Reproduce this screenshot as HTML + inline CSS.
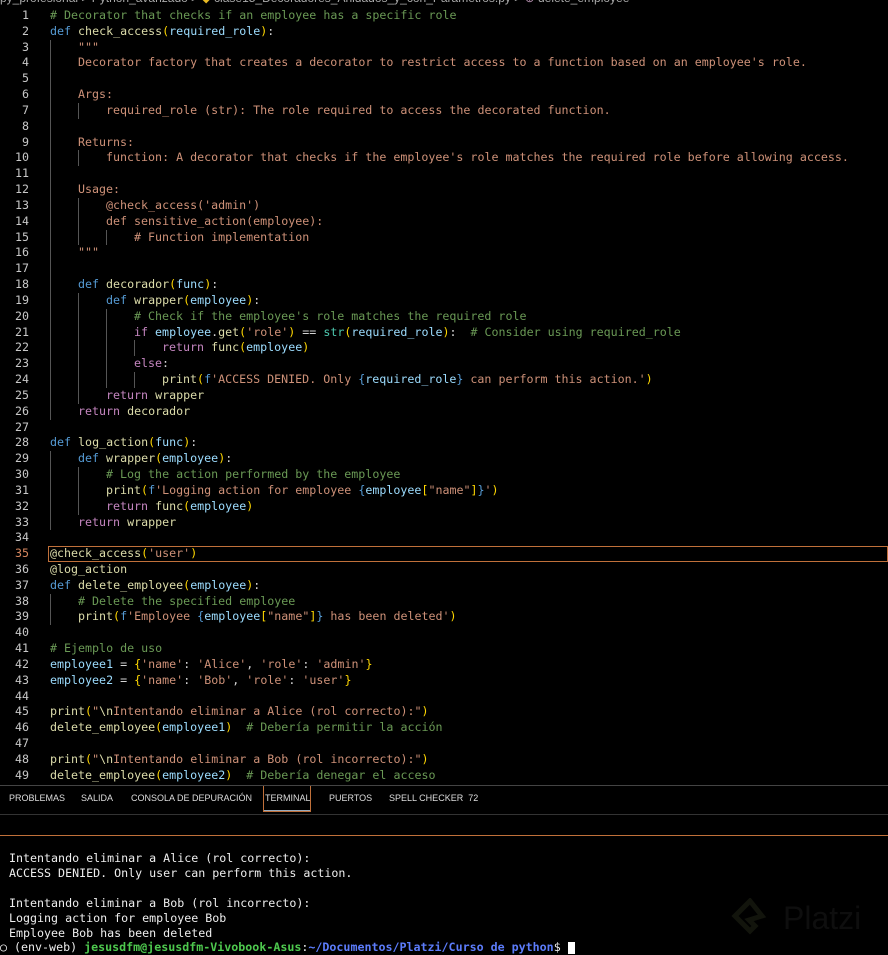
<!DOCTYPE html>
<html><head><meta charset="utf-8"><style>
body{margin:0;background:#000;width:888px;height:953px;overflow:hidden;position:relative;font-family:"DejaVu Sans Mono","Liberation Mono",monospace;}
.bc{position:absolute;top:-9px;left:0;font:12px "Liberation Sans",sans-serif;color:#aaa;white-space:pre}
.ed{position:absolute;top:8px;left:0;width:888px}
.l{height:15.83px;line-height:15.83px;font-size:11.65px;white-space:pre;position:relative;color:#d4d4d4}
.n{position:absolute;left:0;width:29px;text-align:right;color:#c8c8c8}
.t{position:absolute;left:50px}
.g{display:inline-block;width:28px;height:15.83px;vertical-align:top;border-left:1px solid #555;box-sizing:border-box}
.k{color:#569cd6}.c{color:#c586c0}.f{color:#dcdcaa}.p{color:#9cdcfe}.s{color:#ce9178}.m{color:#6a9955}.y{color:#ffd700}
.hl{border:1px solid #c0703a;box-sizing:border-box;position:absolute;left:48px;right:0;top:0;height:15.83px}
.panel{position:absolute;top:785px;left:0;width:888px;height:168px;border-top:1px solid #444}
.tabs{position:absolute;top:7px;left:9px;font:9px "Liberation Sans",sans-serif;color:#ddd;white-space:pre}
.tabs span{position:absolute;top:0}
.term{position:absolute;top:49px;left:0;width:888px;height:1px;background:#c0703a}
.tl{position:absolute;left:9px;font-size:11.65px;color:#eee;white-space:pre;line-height:15px}
</style></head><body>
<div class="bc">py_profesional &gt; Python_avanzado &gt; <span style="color:#e8b923">◆</span> clase15_Decoradores_Anidados_y_con_Parametros.py &gt; <span style="color:#b48ead">⊕</span> delete_employee</div>
<div class="ed">
<div class="l"><span class="n">1</span><span class="t"><span class="m"># Decorator that checks if an employee has a specific role</span></span></div>
<div class="l"><span class="n">2</span><span class="t"><span class="k">def</span> <span class="f">check_access</span><span class="y">(</span><span class="p">required_role</span><span class="y">)</span>:</span></div>
<div class="l"><span class="n">3</span><span class="t"><span class="g"></span><span class="s">"""</span></span></div>
<div class="l"><span class="n">4</span><span class="t"><span class="g"></span><span class="s">Decorator factory that creates a decorator to restrict access to a function based on an employee's role.</span></span></div>
<div class="l"><span class="n">5</span><span class="t"><span class="g"></span></span></div>
<div class="l"><span class="n">6</span><span class="t"><span class="g"></span><span class="s">Args:</span></span></div>
<div class="l"><span class="n">7</span><span class="t"><span class="g"></span><span class="g"></span><span class="s">required_role (str): The role required to access the decorated function.</span></span></div>
<div class="l"><span class="n">8</span><span class="t"><span class="g"></span></span></div>
<div class="l"><span class="n">9</span><span class="t"><span class="g"></span><span class="s">Returns:</span></span></div>
<div class="l"><span class="n">10</span><span class="t"><span class="g"></span><span class="g"></span><span class="s">function: A decorator that checks if the employee's role matches the required role before allowing access.</span></span></div>
<div class="l"><span class="n">11</span><span class="t"><span class="g"></span></span></div>
<div class="l"><span class="n">12</span><span class="t"><span class="g"></span><span class="s">Usage:</span></span></div>
<div class="l"><span class="n">13</span><span class="t"><span class="g"></span><span class="g"></span><span class="s">@check_access('admin')</span></span></div>
<div class="l"><span class="n">14</span><span class="t"><span class="g"></span><span class="g"></span><span class="s">def sensitive_action(employee):</span></span></div>
<div class="l"><span class="n">15</span><span class="t"><span class="g"></span><span class="g"></span><span class="g"></span><span class="s"># Function implementation</span></span></div>
<div class="l"><span class="n">16</span><span class="t"><span class="g"></span><span class="s">"""</span></span></div>
<div class="l"><span class="n">17</span><span class="t"><span class="g"></span></span></div>
<div class="l"><span class="n">18</span><span class="t"><span class="g"></span><span class="k">def</span> <span class="f">decorador</span><span class="y">(</span><span class="p">func</span><span class="y">)</span>:</span></div>
<div class="l"><span class="n">19</span><span class="t"><span class="g"></span><span class="g"></span><span class="k">def</span> <span class="f">wrapper</span><span class="y">(</span><span class="p">employee</span><span class="y">)</span>:</span></div>
<div class="l"><span class="n">20</span><span class="t"><span class="g"></span><span class="g"></span><span class="g"></span><span class="m"># Check if the employee's role matches the required role</span></span></div>
<div class="l"><span class="n">21</span><span class="t"><span class="g"></span><span class="g"></span><span class="g"></span><span class="c">if</span> <span class="p">employee</span>.<span class="f">get</span><span class="y">(</span><span class="s">'role'</span><span class="y">)</span> == <span class="k" style="color:#4ec9b0">str</span><span class="y">(</span><span class="p">required_role</span><span class="y">)</span>:  <span class="m"># Consider using required_role</span></span></div>
<div class="l"><span class="n">22</span><span class="t"><span class="g"></span><span class="g"></span><span class="g"></span><span class="g"></span><span class="c">return</span> <span class="f">func</span><span class="y">(</span><span class="p">employee</span><span class="y">)</span></span></div>
<div class="l"><span class="n">23</span><span class="t"><span class="g"></span><span class="g"></span><span class="g"></span><span class="c">else</span>:</span></div>
<div class="l"><span class="n">24</span><span class="t"><span class="g"></span><span class="g"></span><span class="g"></span><span class="g"></span><span class="f">print</span><span class="y">(</span><span class="k">f</span><span class="s">'ACCESS DENIED. Only </span><span class="k">{</span><span class="p">required_role</span><span class="k">}</span><span class="s"> can perform this action.'</span><span class="y">)</span></span></div>
<div class="l"><span class="n">25</span><span class="t"><span class="g"></span><span class="g"></span><span class="c">return</span> <span class="f">wrapper</span></span></div>
<div class="l"><span class="n">26</span><span class="t"><span class="g"></span><span class="c">return</span> <span class="f">decorador</span></span></div>
<div class="l"><span class="n">27</span></div>
<div class="l"><span class="n">28</span><span class="t"><span class="k">def</span> <span class="f">log_action</span><span class="y">(</span><span class="p">func</span><span class="y">)</span>:</span></div>
<div class="l"><span class="n">29</span><span class="t"><span class="g"></span><span class="k">def</span> <span class="f">wrapper</span><span class="y">(</span><span class="p">employee</span><span class="y">)</span>:</span></div>
<div class="l"><span class="n">30</span><span class="t"><span class="g"></span><span class="g"></span><span class="m"># Log the action performed by the employee</span></span></div>
<div class="l"><span class="n">31</span><span class="t"><span class="g"></span><span class="g"></span><span class="f">print</span><span class="y">(</span><span class="k">f</span><span class="s">'Logging action for employee </span><span class="k">{</span><span class="p">employee</span><span class="y">[</span><span class="s">"name"</span><span class="y">]</span><span class="k">}</span><span class="s">'</span><span class="y">)</span></span></div>
<div class="l"><span class="n">32</span><span class="t"><span class="g"></span><span class="g"></span><span class="c">return</span> <span class="f">func</span><span class="y">(</span><span class="p">employee</span><span class="y">)</span></span></div>
<div class="l"><span class="n">33</span><span class="t"><span class="g"></span><span class="c">return</span> <span class="f">wrapper</span></span></div>
<div class="l"><span class="n">34</span></div>
<div class="l"><span class="hl"></span><span class="n" style="color:#d7875f">35</span><span class="t"><span class="f">@check_access</span><span class="y">(</span><span class="s">'user'</span><span class="y">)</span></span></div>
<div class="l"><span class="n">36</span><span class="t"><span class="f">@log_action</span></span></div>
<div class="l"><span class="n">37</span><span class="t"><span class="k">def</span> <span class="f">delete_employee</span><span class="y">(</span><span class="p">employee</span><span class="y">)</span>:</span></div>
<div class="l"><span class="n">38</span><span class="t"><span class="g"></span><span class="m"># Delete the specified employee</span></span></div>
<div class="l"><span class="n">39</span><span class="t"><span class="g"></span><span class="f">print</span><span class="y">(</span><span class="k">f</span><span class="s">'Employee </span><span class="k">{</span><span class="p">employee</span><span class="y">[</span><span class="s">"name"</span><span class="y">]</span><span class="k">}</span><span class="s"> has been deleted'</span><span class="y">)</span></span></div>
<div class="l"><span class="n">40</span></div>
<div class="l"><span class="n">41</span><span class="t"><span class="m"># Ejemplo de uso</span></span></div>
<div class="l"><span class="n">42</span><span class="t"><span class="p">employee1</span> = <span class="y">{</span><span class="s">'name'</span>: <span class="s">'Alice'</span>, <span class="s">'role'</span>: <span class="s">'admin'</span><span class="y">}</span></span></div>
<div class="l"><span class="n">43</span><span class="t"><span class="p">employee2</span> = <span class="y">{</span><span class="s">'name'</span>: <span class="s">'Bob'</span>, <span class="s">'role'</span>: <span class="s">'user'</span><span class="y">}</span></span></div>
<div class="l"><span class="n">44</span></div>
<div class="l"><span class="n">45</span><span class="t"><span class="f">print</span><span class="y">(</span><span class="s">"</span><span class="f">\n</span><span class="s">Intentando eliminar a Alice (rol correcto):"</span><span class="y">)</span></span></div>
<div class="l"><span class="n">46</span><span class="t"><span class="f">delete_employee</span><span class="y">(</span><span class="p">employee1</span><span class="y">)</span>  <span class="m"># Debería permitir la acción</span></span></div>
<div class="l"><span class="n">47</span></div>
<div class="l"><span class="n">48</span><span class="t"><span class="f">print</span><span class="y">(</span><span class="s">"</span><span class="f">\n</span><span class="s">Intentando eliminar a Bob (rol incorrecto):"</span><span class="y">)</span></span></div>
<div class="l"><span class="n">49</span><span class="t"><span class="f">delete_employee</span><span class="y">(</span><span class="p">employee2</span><span class="y">)</span>  <span class="m"># Debería denegar el acceso</span></span></div>
</div>
<div class="panel">
<div class="tabs"><span style="left:0">PROBLEMAS</span><span style="left:72px">SALIDA</span><span style="left:122px">CONSOLA DE DEPURACIÓN</span><span style="left:256px">TERMINAL</span><span style="left:320px">PUERTOS</span><span style="left:380px">SPELL CHECKER &nbsp;72</span></div>
<div style="position:absolute;left:263px;top:0;width:48px;height:26px;border:1px solid #c0703a;border-top:none;box-sizing:border-box"></div>
<div style="position:absolute;left:264px;top:24px;width:46px;height:1px;background:#9ab"></div>
<div style="position:absolute;left:0;top:28px;width:888px;height:1px;background:#333"></div>
<div class="term"></div>
<svg style="position:absolute;left:731px;top:112px" width="40" height="46" viewBox="0 0 40 46"><path d="M19 3 L4 18 L19 33 L24 28 L18 22 L31 18 Z" fill="none" stroke="#12140c" stroke-width="5"/></svg>
<div style="position:absolute;left:783px;top:114px;font:32px 'Liberation Sans',sans-serif;color:#0e0e0e">Platzi</div>
<div class="tl" style="top:65px">Intentando eliminar a Alice (rol correcto):</div>
<div class="tl" style="top:80px">ACCESS DENIED. Only user can perform this action.</div>
<div class="tl" style="top:110px">Intentando eliminar a Bob (rol incorrecto):</div>
<div class="tl" style="top:125px">Logging action for employee Bob</div>
<div class="tl" style="top:140px">Employee Bob has been deleted</div>
<div class="tl" style="top:154px;left:0">○ (env-web) <b style="color:#4ec94e">jesusdfm@jesusdfm-Vivobook-Asus</b>:<b style="color:#5c7cfa">~/Documentos/Platzi/Curso de python</b>$ <span style="display:inline-block;width:7px;height:12px;background:#fff;vertical-align:middle"></span></div>
</div>
</body></html>
